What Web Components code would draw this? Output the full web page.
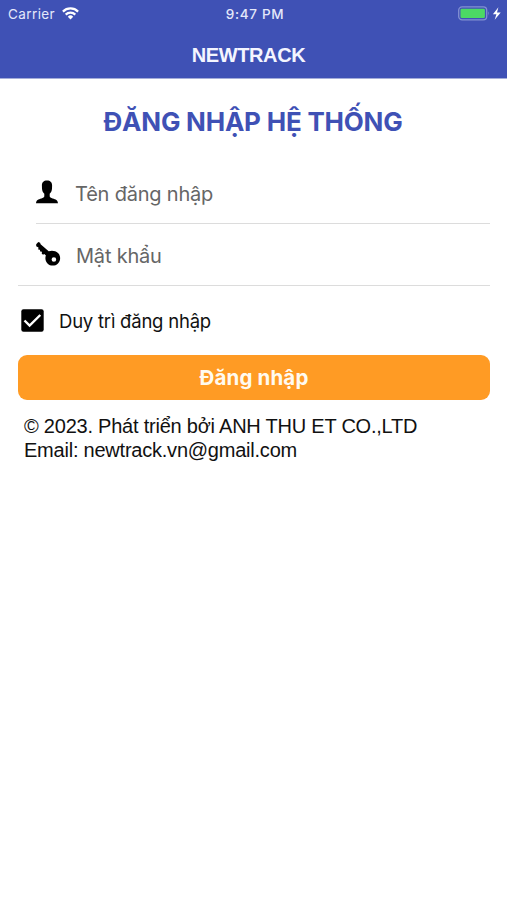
<!DOCTYPE html>
<html lang="vi">
<head>
<meta charset="utf-8">
<title>NEWTRACK</title>
<style>
body{margin:0;background:#fff;font-family:Inter,"Liberation Sans",sans-serif;color:#111}
</style>
</head>
<body>
<login-screen></login-screen>
<script>
const define=(name,html)=>customElements.define(name,class extends HTMLElement{
  constructor(){super();this.attachShadow({mode:"open"}).innerHTML=html;}
});
define("status-bar",`<style>
:host{display:grid;grid-template-columns:1fr auto 1fr;align-items:center;height:27px;padding:0 5px 0 8px;color:#e4e8fa;font-size:13.5px;line-height:18px;white-space:nowrap}
.l{display:flex;align-items:center;gap:7px;letter-spacing:.4px}.t{font-size:13.5px;font-weight:500;letter-spacing:.7px}
.r{display:flex;justify-content:flex-end}svg{display:block}
</style>
<div class="l"><span>Carrier</span><svg width="17" height="13" viewBox="0 0 17 13" fill="none" stroke="#fff" stroke-width="2.2"><path d="M.9 4.6a10.8 10.8 0 0 1 15.2 0M3.7 7.6a6.8 6.8 0 0 1 9.6 0"/><path d="M8.5 12.4 5.8 9.7a3.8 3.8 0 0 1 5.4 0z" fill="#fff" stroke="none"/></svg></div>
<span class="t">9:47 PM</span>
<div class="r"><svg width="44" height="15" viewBox="0 0 44 15"><rect x=".7" y=".9" width="28" height="13" rx="3.4" fill="none" stroke="#8391d2" stroke-width="1.3"/><rect x="2.5" y="2.7" width="24.4" height="9.4" rx="1.4" fill="#4cd964"/><path d="M30.3 5.2q1.8 2.2 0 4.5z" fill="#8391d2"/><path d="M40.4 1.2 34.900 8.200h3.500l-1.700 5.600 6-7.200h-3.700z" fill="#fff"/></svg></div>`);
define("app-header",`<style>
:host{display:flex;flex-direction:column;height:79px;box-sizing:border-box;background:#3f51b5;border-bottom:1px solid #a4add9}
h1{margin:0;flex:1;display:flex;align-items:center;justify-content:center;padding:5px 10px 0 0;color:#f4f5ff;font:bold 20px/24px "Liberation Sans",sans-serif;letter-spacing:-.4px}
</style><status-bar></status-bar><h1><slot></slot></h1>`);
define("form-field",`<style>
:host{display:flex;align-items:center;box-sizing:border-box;height:62px;border-bottom:1px solid #dcdcdc;color:#666;font-size:20px;line-height:26px;letter-spacing:-.2px}
.i{width:26px;height:26px;flex:none;margin-right:var(--gap,13px)}
.v{padding-top:2px}
</style><span class="i"><slot name="icon"></slot></span><span class="v"><slot></slot></span>`);
define("check-option",`<style>
:host{display:flex;align-items:center;gap:15px;height:69px;padding-left:3px;color:#111;font-size:18.5px;line-height:24px;letter-spacing:-.22px}
svg{display:block}
</style><svg width="23" height="23" viewBox="0 0 23 23"><rect x=".3" y=".3" width="22.4" height="22.4" rx="2.2" fill="#000"/><path d="m3.5 11.5 5.1 5.1L19.3 6" fill="none" stroke="#fff" stroke-width="2.4"/></svg><span><slot></slot></span>`);
define("primary-button",`<style>
:host{display:flex;align-items:center;justify-content:center;height:45px;border-radius:9px;background:#ff9b24;color:#fffaf0;font-size:20.5px;font-weight:700;line-height:26px;letter-spacing:.15px}
</style><span><slot></slot></span>`);
define("page-footer",`<style>
:host{display:block;padding:14px 0 0 6px;color:#111;font:20px/24px "Liberation Sans",sans-serif;letter-spacing:-.225px;white-space:nowrap}
</style><slot></slot>`);
define("login-screen",`<style>
:host{display:block;height:900px;overflow:hidden;background:#fff}
main{padding:0 17px 0 18px}
h2{margin:0;height:83px;box-sizing:border-box;padding:26px 2px 0 0;text-align:center;color:#3f51b5;font-size:26px;line-height:34px;font-weight:650;letter-spacing:-.22px;white-space:nowrap}
form-field.u{margin-left:18px}form-field.p{padding-left:18px;--gap:14px}
form-field svg{display:block}
.s{display:block}
</style>
<app-header>NEWTRACK</app-header>
<main><h2><span class="title">ĐĂNG NHẬP HỆ THỐNG</span></h2>
<form-field class="u"><svg slot="icon" width="26" height="26" viewBox="0 0 26 26"><path d="M11 .5C7.600.5 5.800 2.500 5.900 5.600L6 8.700C6.200 11 7 12.400 8.300 13.800V16.300C8.300 17.500 7 18 5.400 18.500 2.200 19.400.3 20 0 23.300H22C21.700 20 19.800 19.400 16.600 18.500 15 18 13.700 17.500 13.700 16.300V13.800C15 12.400 15.800 11 16 8.700L16.100 5.600C16.200 2.500 14.400.5 11 .5Z"/></svg>Tên đăng nhập</form-field>
<form-field class="p"><svg slot="icon" width="26" height="26" viewBox="0 0 26 26"><path fill-rule="evenodd" d="M.2 2.300 2.300 0 4.100.7 4.600 2.300 12.700 9.300C15.800 8.200 19.600 8.700 22 11.100 24.900 13.900 24.800 18.500 22 21.400 19.100 24.300 14.300 24.300 11.500 21.400 9.300 19.100 8.900 16.100 9.900 13.500L8.300 11.900 7 12.700 5.700 11.500 6 9.800 4.200 9.600 3.900 7.800 2.200 7.400 2.500 5.500.2 4.200ZM17.900 15.200A2.300 2.300 0 1 0 17.900 19.800 2.300 2.300 0 1 0 17.900 15.200Z"/></svg>Mật khẩu</form-field>
<check-option>Duy trì đăng nhập</check-option>
<primary-button>Đăng nhập</primary-button>
<page-footer><span class="s">© 2023. Phát triển bởi ANH THU ET CO.,LTD</span><span class="s">Email: newtrack.vn@gmail.com</span></page-footer></main>`);
</script>
</body>
</html>
